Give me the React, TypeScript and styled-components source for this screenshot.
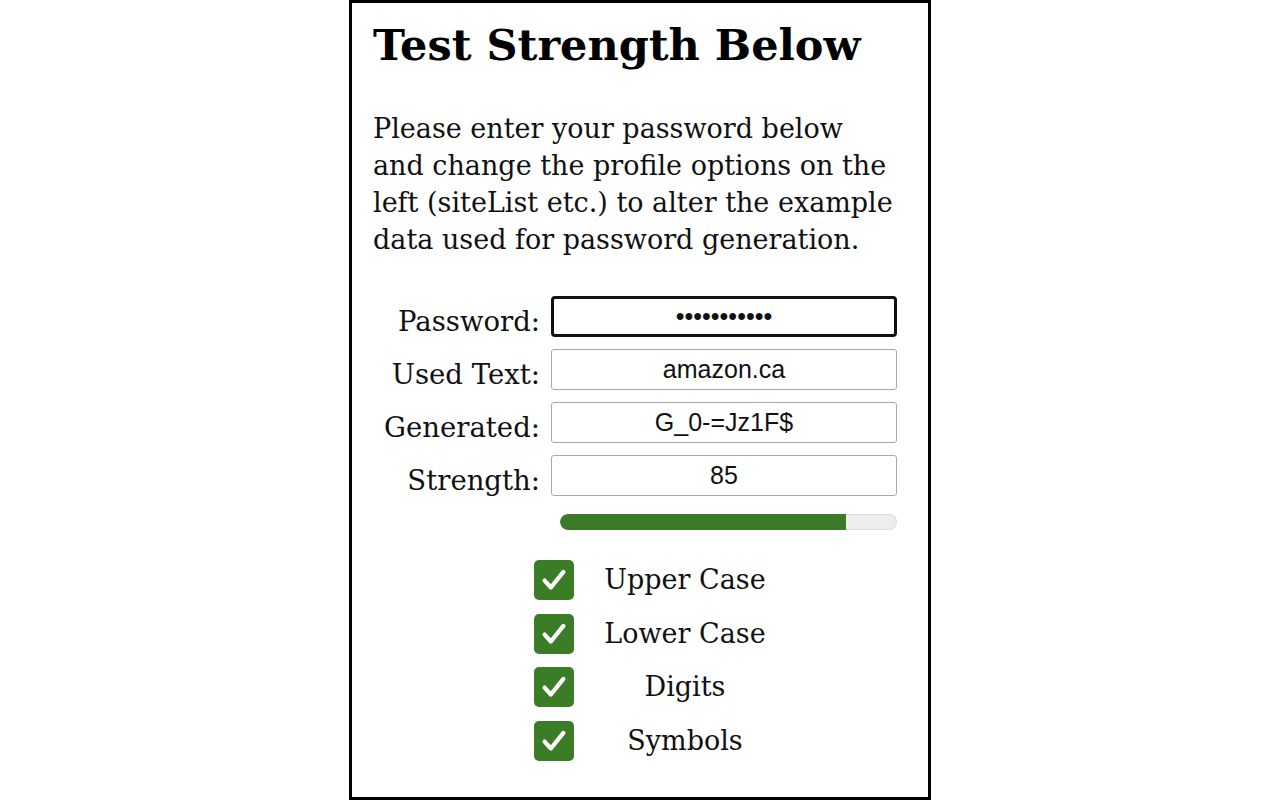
import styled, { createGlobalStyle } from "styled-components";

const Global = createGlobalStyle`
  html, body {
    margin: 0;
    padding: 0;
    background: #fff;
  }
  body {
    font-family: "DejaVu Serif", "Liberation Serif", serif;
    color: #111;
  }
`;

const Page = styled.div`
  display: flex;
  justify-content: center;
`;

const Card = styled.div`
  box-sizing: border-box;
  width: 582px;
  height: 800px;
  border: 3px solid #000;
  padding: 0 30px 0 21px;
  overflow: hidden;
`;

const Title = styled.h1`
  margin: 14px 0 0;
  font-size: 43px;
  line-height: 56px;
  font-weight: bold;
  color: #000;
`;

const Intro = styled.p`
  margin: 37px 0 0;
  font-size: 27px;
  line-height: 37px;
`;

const Form = styled.div`
  display: grid;
  grid-template-columns: 167px 346px;
  column-gap: 11px;
  row-gap: 12px;
  margin-top: 38px;
`;

const Label = styled.label`
  text-align: right;
  font-size: 27.5px;
  line-height: 31px;
  padding-top: 10px;
  white-space: nowrap;
`;

const Field = styled.input<{ $focused?: boolean }>`
  box-sizing: border-box;
  width: 346px;
  height: 41px;
  margin: 0;
  padding: 0 8px;
  font-family: "Liberation Sans", Arial, sans-serif;
  font-size: 25px;
  text-align: center;
  color: #111;
  background: #fff;
  border: ${(p) => (p.$focused ? "3px solid #111" : "1px solid #a9a9a9")};
  border-radius: ${(p) => (p.$focused ? "4px" : "3px")};
  outline: none;
`;

const Meter = styled.div`
  grid-column: 2;
  margin: 6px 0 0 9px;
  height: 16px;
  border-radius: 8px;
  background: #eeeeee;
  box-shadow: inset 0 0 0 1px #dddddd;
  overflow: hidden;
`;

const Fill = styled.div`
  height: 100%;
  background: #3a7a28;
  border-radius: 8px 0 0 8px;
`;

const Options = styled.div`
  display: flex;
  flex-direction: column;
  gap: 13.5px;
  margin: 30px 0 0 161px;
`;

const Option = styled.label`
  display: flex;
  align-items: center;
`;

const Box = styled.span`
  box-sizing: border-box;
  display: flex;
  align-items: center;
  justify-content: center;
  width: 40px;
  height: 40px;
  border-radius: 5px;
  background: #3a7d26;
`;

const OptionText = styled.span`
  width: 222px;
  text-align: center;
  font-size: 27px;
  line-height: 40px;
`;

const Check = () => (
  <Box>
    <svg width="30" height="30" viewBox="0 0 24 24">
      <path
        d="M4.5 12.5 L9.5 18 L19.5 5.5"
        fill="none"
        stroke="#fff"
        strokeWidth="3.4"
        strokeLinecap="round"
        strokeLinejoin="round"
      />
    </svg>
  </Box>
);

const fields = [
  { label: "Password:", value: "aaaaaaaaaaa", type: "password", focused: true },
  { label: "Used Text:", value: "amazon.ca", type: "text" },
  { label: "Generated:", value: "G_0-=Jz1F$", type: "text" },
  { label: "Strength:", value: "85", type: "text" },
];

const options = ["Upper Case", "Lower Case", "Digits", "Symbols"];

export default function App() {
  return (
    <Page>
      <Global />
      <Card>
        <Title>Test Strength Below</Title>
        <Intro>
          Please enter your password below and change the profile options on
          the left (siteList etc.) to alter the example data used for password
          generation.
        </Intro>
        <Form>
          {fields.map((f) => [
            <Label key={f.label + "l"}>{f.label}</Label>,
            <Field
              key={f.label + "f"}
              type={f.type}
              value={f.value}
              readOnly
              $focused={f.focused}
            />,
          ])}
          <Meter>
            <Fill style={{ width: "85%" }} />
          </Meter>
        </Form>
        <Options>
          {options.map((o) => (
            <Option key={o}>
              <Check />
              <OptionText>{o}</OptionText>
            </Option>
          ))}
        </Options>
      </Card>
    </Page>
  );
}
